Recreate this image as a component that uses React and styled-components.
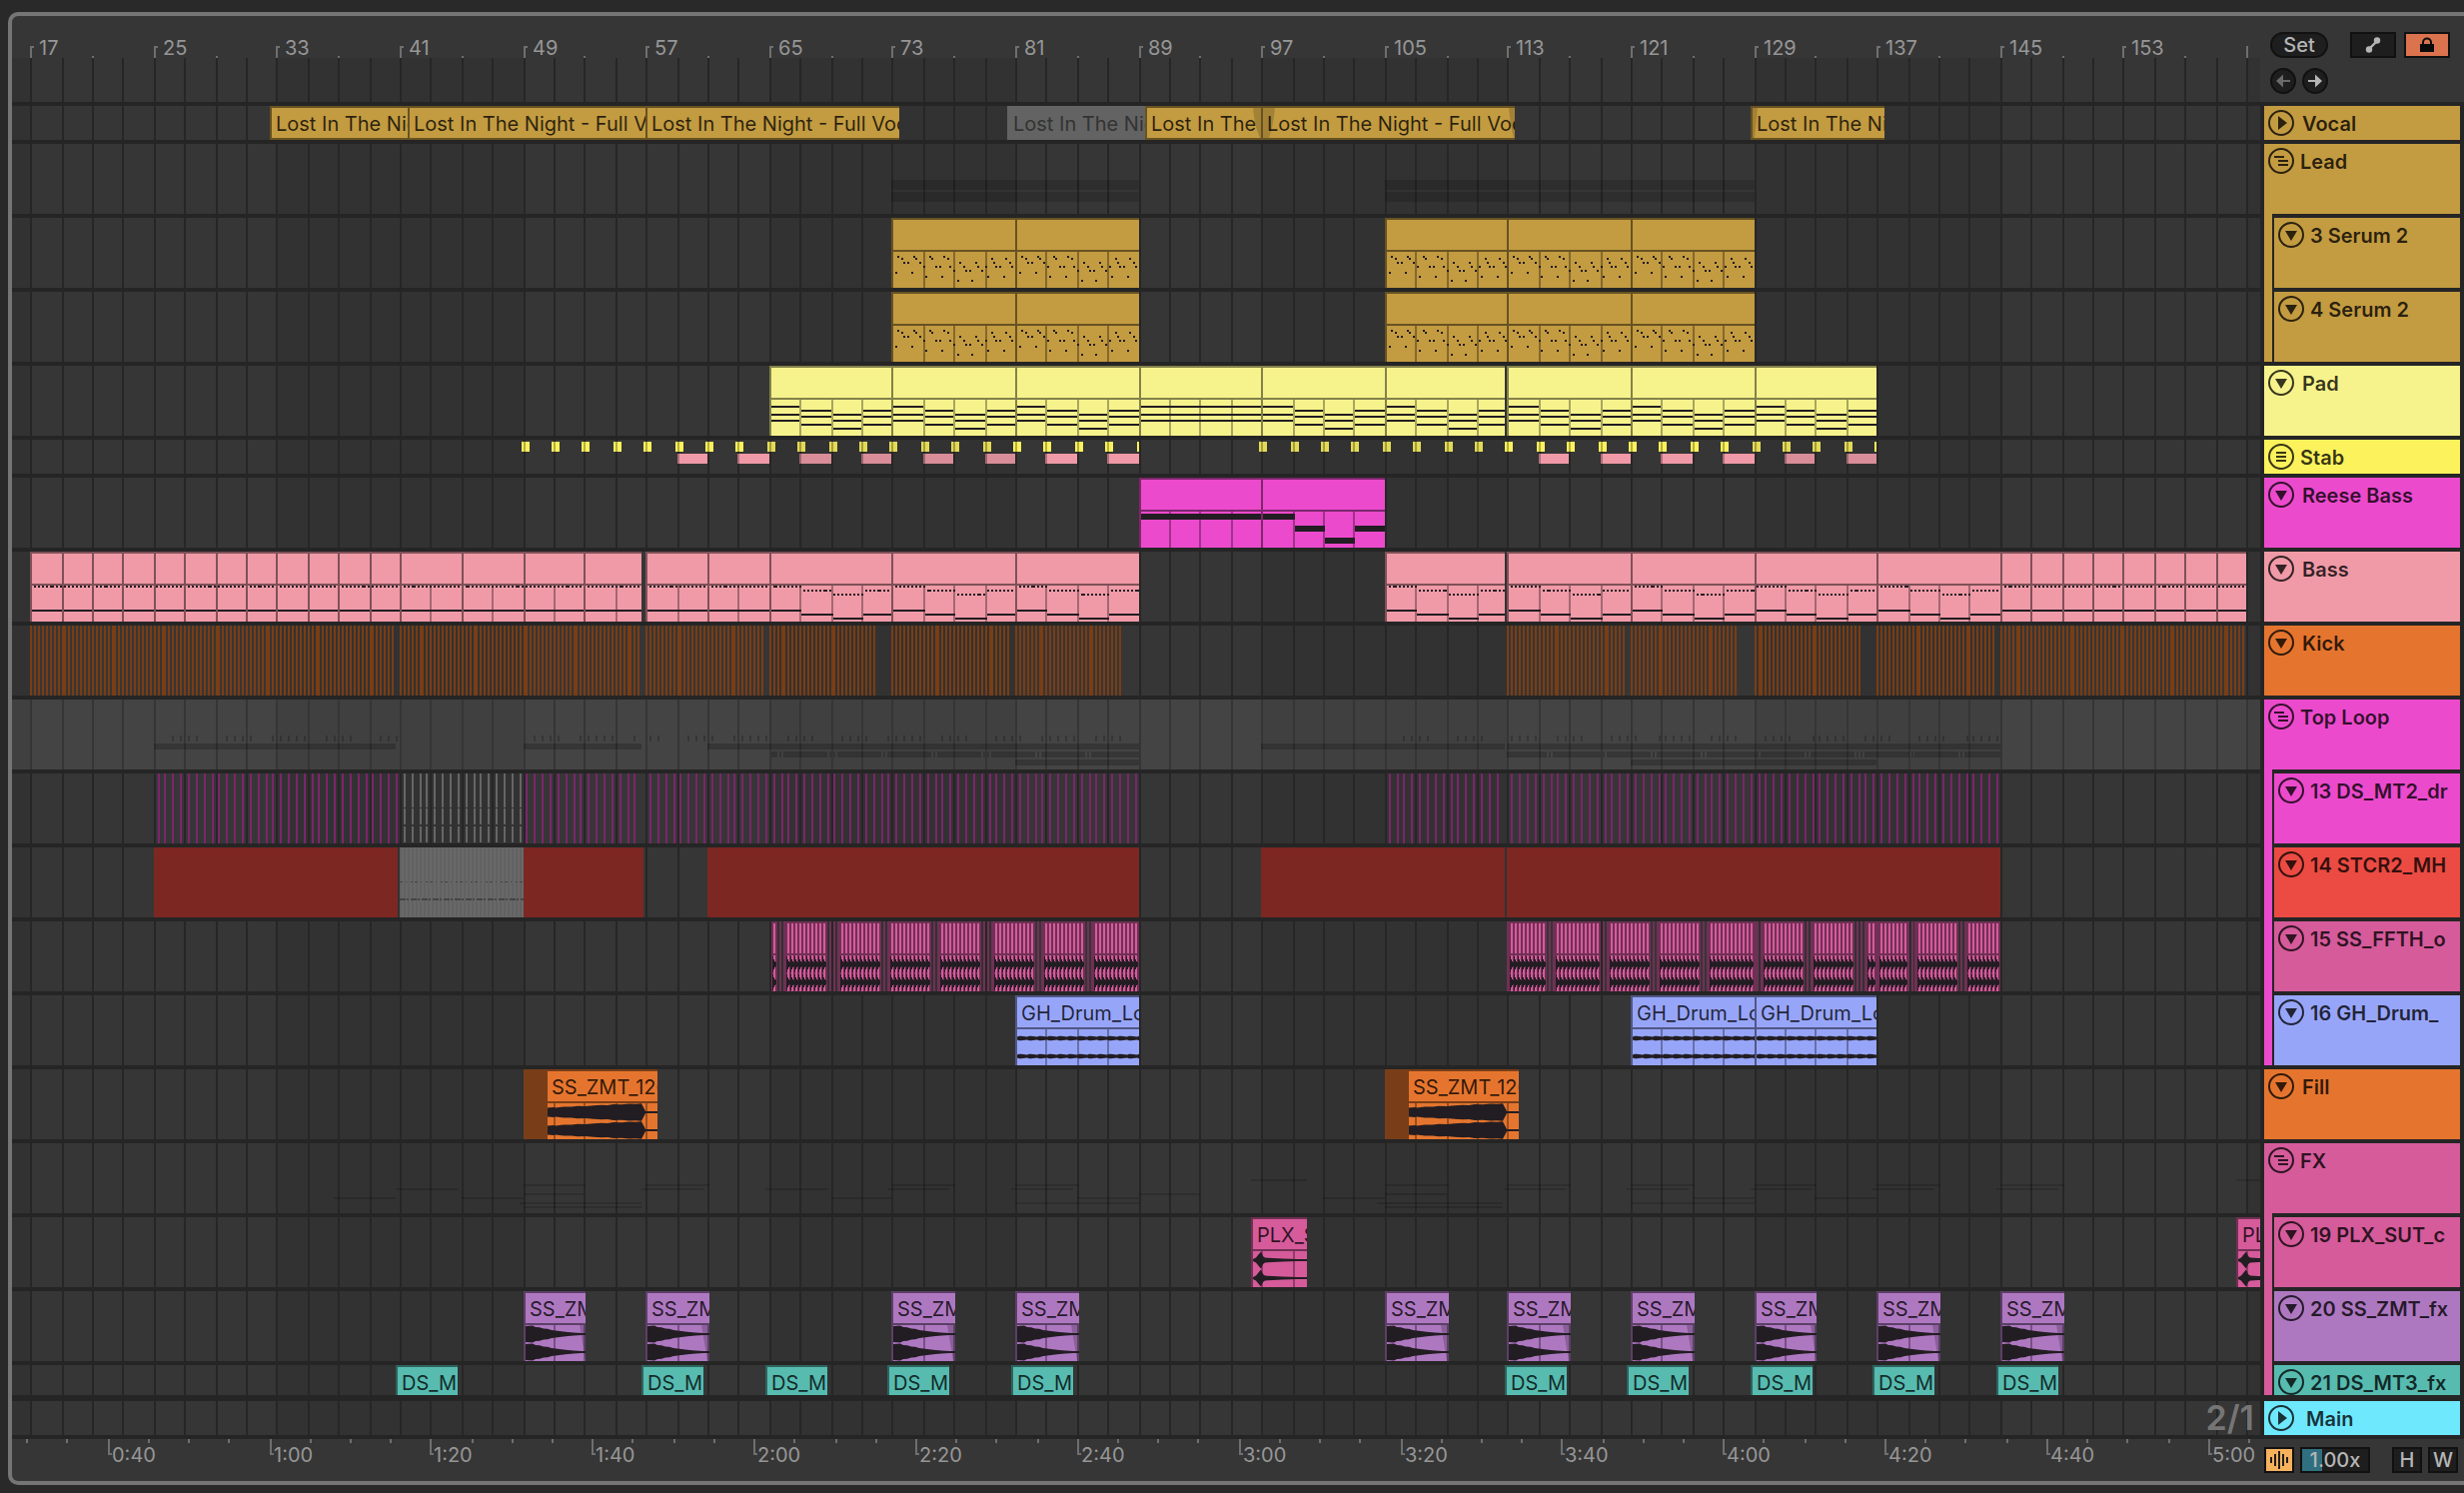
import React, { useState } from 'react'
import styled, { createGlobalStyle } from 'styled-components'

const COLORS = {
    gold: '#c39b41',
    pad: '#f7f38c',
    stab: '#fcf25c',
    magenta: '#ec4acd',
    pink: '#f09aa7',
    orange: '#e5752e',
    red: '#eb4b42',
    rose: '#d55b9b',
    blue: '#97a5f9',
    purple: '#ae78c1',
    teal: '#57bbb0',
    cyan: '#6ee8fd'
}

// bar number -> pixels inside the timeline, snapped to the 2px raster
const BAR = 15.4025
const x = bar => 2 * Math.round((18.2 + (bar - 17) * BAR) / 2)

const range = (from, to, step = 1) => {
    const list = []
    for (let v = from; v < to; v += step) list.push(v)
    return list
}

const box = (left, top, width, height) => `M${left} ${top}h${width}v${height}h${-width}z`

// four phrases of a riff, two bars each: [x, y] inside the clip body
const SERUM_NOTES = [
    [4, 20], [6, 4], [10, 6], [12, 10], [16, 10], [20, 20], [22, 4], [24, 6], [28, 10], [32, 14],
    [34, 24], [38, 4], [40, 6], [44, 14], [48, 14], [50, 24], [52, 4], [56, 6], [58, 14], [62, 18],
    [66, 28], [68, 10], [72, 14], [74, 18], [78, 18], [80, 28], [84, 10], [86, 14], [90, 18], [94, 14],
    [96, 24], [100, 6], [102, 10], [104, 14], [108, 14], [112, 24], [114, 6], [118, 10], [120, 14]
]

const PAD_CHORDS = [[6, 14, 20], [10, 16, 24], [14, 20, 28], [10, 16, 24]]
const BASS_STEPS = [0, 4, 8, 4]

const serumPath = () => SERUM_NOTES.map(([nx, ny]) => box(nx - 2, ny, 2, 2)).join('')

const padPath = (from, to, held) => range(from, to, 2).map((bar, i) => {
    const left = x(bar) - x(from)
    const width = Math.min(x(bar + 2), x(to)) - x(bar) - 2
    return PAD_CHORDS[held ? 0 : i % 4].map(y => box(left, y, held ? width + 2 : width, 2)).join('')
}).join('')

const bassPath = (from, to, moving) => range(from, to, 2).map((bar, i) => {
    const drop = moving ? BASS_STEPS[i % 4] : 0
    const end = Math.min(bar + 2, to)
    const dots = range(bar, end - 0.1, 0.25)
        .map(b => box(x(b + 0.1) - x(from), drop, 2, 2)).join('')
    return dots + box(x(bar) - x(from), 24 + drop, x(end) - x(bar), 2)
}).join('')

const reesePath = (from, steps) => steps.map((y, i) => {
    const left = x(from + i * 2) - x(from)
    return box(left, y, x(from + i * 2 + 2) - x(from + i * 2), 6)
}).join('')

// mirrored envelope drawn once per channel; points are [x, half height]
const wavePath = points => [9, 27].map(mid => {
    const top = points.map(([px, h]) => `${px} ${mid - h}`)
    const bottom = points.slice().reverse().map(([px, h]) => `${px} ${mid + h}`)
    return `M${top.join('L')}L${bottom.join('L')}z`
}).join('')

const RISER = wavePath([
    [0, 4.6], [6, 5], [8, 4.6], [16, 5.4], [24, 5.6], [30, 6.2], [38, 6], [46, 6.8], [54, 7.2], [60, 7],
    [66, 8], [74, 7.8], [82, 8.4], [88, 8.2], [94, 8.8], [97, 3], [98, 1], [112, 1]
])
const IMPACT = wavePath([
    [0, 8], [7, 8.4], [10, 7], [14, 6.8], [18, 5.4], [22, 5.2], [26, 4], [32, 3.2], [40, 2.2], [48, 1.6], [56, 1], [64, 1]
])
const CRASH = wavePath([[0, 1], [3, 2.5], [5, 5], [8, 8.4], [10, 4], [12, 2.4], [20, 2], [30, 1.4], [44, 1], [60, 1]])
const LOOP = wavePath(range(0, 126, 2).map(px => [px, 1.6 + ((px * 7) % 5) * 0.18]))

const vocals = [
    { from: 32.6, to: 41.5 },
    { from: 41.5, to: 57 },
    { from: 57, to: 73.5 },
    { from: 80.5, to: 89.5, muted: true },
    { from: 89.5, to: 97, fadeOut: 8 },
    { from: 97, to: 113.5, fadeIn: 12, fadeOut: 6 },
    { from: 128.8, to: 137.5, fadeIn: 5 }
].map(clip => ({ ...clip, title: 'Lost In The Night - Full Vocal' }))

const serums = [73, 81, 105, 113, 121].map(from => ({ from, to: from + 8, path: serumPath() }))

const pads = range(65, 137, 8).map(from => {
    const to = from === 105 ? 112.85 : from + 8
    return { from, to, path: padPath(from, to, from === 89) }
})

const reeses = [
    { from: 89, to: 97, path: reesePath(89, [2, 2, 2, 2]) },
    { from: 97, to: 105, path: reesePath(97, [2, 14, 26, 14]) }
]

const basses = [
    ...range(17, 41, 2).map(from => ({ from, to: from + 2 })),
    { from: 41, to: 45 },
    { from: 45, to: 49 },
    { from: 49, to: 53 },
    { from: 53, to: 56.75 },
    { from: 57, to: 61 },
    { from: 61, to: 65 },
    ...[65, 73, 81].map(from => ({ from, to: from + 8, moving: true })),
    { from: 105, to: 112.85, moving: true },
    ...[113, 121, 129, 137].map(from => ({ from, to: from + 8, moving: true })),
    ...range(145, 161, 2).map(from => ({ from, to: from + 2 }))
].map(clip => ({ ...clip, path: bassPath(clip.from, clip.to, clip.moving) }))

const drums = [81, 121, 129].map(from => ({ from, to: from + 8, title: 'GH_Drum_Loop', path: LOOP }))
const fills = [49, 105].map(from => ({ from, to: from + 8.75, title: 'SS_ZMT_126', path: RISER, lead: 24 }))
const crashes = [
    { from: 96.35, to: 100, title: 'PLX_SUT', path: CRASH },
    { from: 160.4, to: 164, title: 'PLX_SUT', path: CRASH }
]
const impacts = [49, 57, 73, 81, 105, 113, 121, 129, 137, 145]
    .map(from => ({ from, to: from + 4.12, title: 'SS_ZMT', path: IMPACT, tail: true }))
const downs = [40.75, 56.75, 64.75, 72.75, 80.75, 112.85, 120.75, 128.75, 136.75, 144.75]
    .map(from => ({ from, to: from + 4, title: 'DS_MT3' }))

const KICK_RANGES = [
    [17, 40.75], [41, 56.75], [57, 64.75], [65, 72], [73, 80.75], [81, 88],
    [113, 120.75], [121, 128], [129, 136], [137, 144.75], [145, 161]
]
const SHAKER_RANGES = [[25, 41], [49, 56.5], [57, 89], [105, 112.5], [113, 145]]
const HAT_RANGES = [[25, 40.9], [49, 56.9], [61, 89], [97, 112.85], [113, 145]]

// sliced percussion: [left, width] of each slice, [left, count] of the hits in it
const SLICES = [
    [760, 6], [768, 2], [772, 44], [818, 2], [822, 2], [826, 44], [872, 2], [876, 44], [922, 2], [926, 44],
    [972, 2], [976, 2], [980, 44], [1026, 2], [1030, 44], [1076, 2], [1080, 48],
    [1496, 40], [1538, 2], [1542, 48], [1592, 2], [1596, 44], [1642, 2], [1646, 44], [1692, 2], [1696, 52],
    [1750, 44], [1796, 2], [1800, 44], [1846, 2], [1850, 2], [1854, 45], [1901, 2], [1904, 44], [1950, 2], [1954, 36]
]
const HITS = [
    [762, 1], [776, 10], [830, 10], [880, 10], [930, 10], [984, 10], [1034, 10], [1084, 11],
    [1500, 9], [1546, 11], [1600, 10], [1650, 10], [1700, 11], [1754, 10], [1804, 10], [1858, 2], [1870, 7],
    [1908, 10], [1958, 8]
]

const FX_LINES = [
    { y: 36, spans: [[96.35, 100], [160.4, 164]] },
    { y: 41, spans: impacts.map(c => [c.from, c.to]) },
    { y: 45, spans: downs.map(c => [c.from, c.to]) },
    { y: 50, spans: [[49, 53], [89, 93], [105, 109]] },
    { y: 54, spans: [[36.75, 40.75], [45, 49], [69, 73], [85, 89], [101, 105], [125, 129], [133, 137]] },
    { y: 59, spans: [[48.75, 56.75], [81, 89], [104.5, 112.75], [121, 129]] },
    { y: 63, spans: [[49, 56.75], [105, 112.75]] }
]

const spanPath = (spans, y, h) => spans.map(([a, b]) => box(x(a), y, x(b) - x(a), h)).join('')

const kickPath = KICK_RANGES.map(([a, b]) => range(a, b, 0.25).map(v => box(x(v), 0, 2, 70)).join('')).join('')
const shakers = SHAKER_RANGES.flatMap(([a, b]) => range(a + 0.25, b, 0.5))
const shakerPath = shakers.map(v => box(x(v), 0, 2, 70)).join('')
const shakerTicks = shakers.filter(v => {
    const k = Math.round((v - 25.25) * 2) % 20
    return (k >= 2 && k <= 5) || (k >= 9 && k <= 12) || k >= 15
}).map(v => box(x(v), 36, 2, 6)).join('')
const mutedShakers = range(41.25, 49, 0.5)
    .map(v => box(x(v), 0, 2, 34) + box(x(v), 35, 2, 16) + box(x(v), 53, 2, 16)).join('')

const hitList = HITS.flatMap(([left, count]) => range(0, count).map(i => left + i * 4))
const hitBars = hitList.map(left => box(left, 2, 2, 30) + box(left, 34, 2, 36)).join('')
const hitWaves = hitList.map(left => [43, 61].map(mid =>
    `M${left - 1} ${mid - 8}l1 1l1 4l2 2v2l-2 2l-1 4l-1 1z`).join('')).join('')

const hatTexture = range(x(41), x(49), 4).map(v => box(v, 0, 2, 70)).join('')

function Grid() {
    return (
        <GridLayer aria-hidden="true">
            {[1, 33, 65, 97, 129, 161].map(bar => (
                <rect key={bar} x={x(bar)} y="0" width={x(bar + 16) - x(bar)} height="100%" fill="#323232" />
            ))}
            {range(17, 163, 2).map(bar => (
                <rect key={bar} x={x(bar)} y="0" width="2" height="100%" fill="#262626" />
            ))}
        </GridLayer>
    )
}

function Clip({ clip, color }) {
    const left = x(clip.from)
    const width = x(clip.to) - left
    const lead = clip.lead || 0
    const firstLine = Math.ceil((clip.from + 0.3 - 1) / 2) * 2 + 1
    const lines = range(firstLine, clip.to, 2)
        .map(bar => x(bar) - left - (lead || 2))
        .filter(v => v > 0)
        .map(v => box(v, 0, 2, 36)).join('')

    return (
        <ClipBox $color={color} $muted={clip.muted} $lead={lead} style={{ left, width }}>
            <ClipTitle $muted={clip.muted}>{clip.title}</ClipTitle>
            {clip.path && (
                <ClipBody>
                    <path d={lines} fill="rgba(0, 0, 0, 0.32)" />
                    {clip.tail && <path d="M54 0h8v36h-2z" fill="rgba(0, 0, 0, 0.2)" />}
                    <path d={clip.path} fill="#221d22" />
                </ClipBody>
            )}
            {(clip.fadeIn || clip.fadeOut) && (
                <Fades>
                    {clip.fadeIn && <path d={`M0 0h${clip.fadeIn}q-2 20 -${Math.ceil(clip.fadeIn / 2)} 30h-${Math.floor(clip.fadeIn / 2)}z`} />}
                    {clip.fadeOut && <path d={`M${width - 2} 0h-${clip.fadeOut}q2 20 ${clip.fadeOut - 1} 30h1z`} />}
                </Fades>
            )}
        </ClipBox>
    )
}

function ClipLane({ clips, color, height = 70 }) {
    return (
        <Lane $height={height}>
            {clips.map(clip => <Clip key={clip.from} clip={clip} color={color} />)}
        </Lane>
    )
}

function StabLane() {
    const marks = [...range(49, 89, 2), ...range(97, 137, 2)]
    const blocks = [59, 63, 67, 71, 75, 79, 83, 87, 115, 119, 123, 127, 131, 135]
    const shaded = bar => Math.floor((bar - 1) / 16) % 2 === 0
    return (
        <Lane $height={34}>
            <Drawing>
                {marks.map(bar => (
                    <g key={bar} opacity={shaded(bar) ? 0.88 : 1}>
                        <rect x={x(bar) - 2} y="2" width="8" height="10" fill={COLORS.stab} />
                        <rect x={x(bar)} y="2" width="2" height="10" fill="rgba(0, 0, 0, 0.28)" />
                    </g>
                ))}
                {[89, 137].map(bar => (
                    <rect key={bar} x={x(bar) - 2} y="2" width="2" height="10" fill={COLORS.stab} />
                ))}
                {blocks.map(bar => (
                    <g key={bar} opacity={shaded(bar) ? 0.88 : 1}>
                        <rect x={x(bar)} y="14" width={x(bar + 2) - x(bar)} height="10" fill={COLORS.pink} />
                        <rect x={x(bar)} y="14" width="2" height="10" fill="rgba(0, 0, 0, 0.28)" />
                    </g>
                ))}
            </Drawing>
        </Lane>
    )
}

function BarRuler() {
    const bars = range(17, 161, 8)
    return (
        <Ruler>
            <RulerTicks>
                {[...bars, 161].map(bar => (
                    <path key={bar} d={box(x(bar), 30, 2, 12) + (bar < 161 ? box(x(bar) + 2, 30, 2, 2) : '')} />
                ))}
                {bars.map(bar => <path key={bar} d={box(x(bar + 4), 40, 2, 2)} />)}
            </RulerTicks>
            <RulerCell style={{ width: x(17) }} />
            {bars.map(bar => (
                <RulerCell key={bar} style={{ width: x(bar + 8) - x(bar) }}>
                    <BarLabel>{bar}</BarLabel>
                </RulerCell>
            ))}
        </Ruler>
    )
}

// 20 seconds are ten and a half bars at 126 bpm
const timeX = seconds => 2 * Math.floor((96.4 + (seconds - 40) * 8.085) / 2)

function TimeRuler() {
    const labels = range(40, 301, 20)
    return (
        <Ruler>
            <RulerTicks>
                {range(30, 310, 5).map(s => (
                    s % 20 === 0
                        ? <path key={s} d={box(timeX(s), 0, 2, 16) + box(timeX(s) + 2, 14, 2, 2)} />
                        : <path key={s} d={box(timeX(s), 0, 2, 4)} />
                ))}
            </RulerTicks>
            <RulerCell style={{ width: timeX(40) }} />
            {labels.map(s => (
                <RulerCell key={s} style={{ width: timeX(s + 20) - timeX(s) }}>
                    <TimeLabel>{`${Math.floor(s / 60)}:${String(s % 60).padStart(2, '0')}`}</TimeLabel>
                </RulerCell>
            ))}
        </Ruler>
    )
}

const GLYPHS = {
    open: <path d="M7 9h12l-6 10z" />,
    closed: <path d="M10 6l9 7l-9 7z" />,
    group: <path d="M6 8h10v2h-10zM10 12h10v2h-10zM10 16h10v2h-10z" />,
    list: <path d="M8 8h10v2h-10zM8 12h10v2h-10zM8 16h10v2h-10z" />
}

function TrackHeader({ name, color, glyph = 'open', height = 70, gap = 6 }) {
    return (
        <HeaderBox $color={color} $height={height} $gap={gap}>
            <FoldButton aria-label={`Fold ${name}`}>
                <svg width="26" height="26" viewBox="0 0 26 26" fill="currentColor" aria-hidden="true">
                    <circle cx="13" cy="13" r="12" fill="none" stroke="currentColor" strokeWidth="2" />
                    {GLYPHS[glyph]}
                </svg>
            </FoldButton>
            <TrackName>{name}</TrackName>
        </HeaderBox>
    )
}

function TrackGroup({ name, color, children }) {
    return (
        <GroupBox $color={color}>
            <TrackHeader name={name} color={color} glyph="group" />
            <GroupTracks>{children}</GroupTracks>
        </GroupBox>
    )
}

function App() {
    const [speed, setSpeed] = useState('1.00x')

    return (
        <>
            <GlobalStyle />
            <Panel>
                <Timeline>
                    <BarRuler />
                    <Stage>
                        <Grid />
                        <Scrub />
                        <ClipLane clips={vocals} color={COLORS.gold} height={34} />
                        <Lane $height={70}>
                            <Drawing>
                                <path d={spanPath([[73, 89], [105, 129]], 36, 10)} fill="rgba(0, 0, 0, 0.14)" />
                                <path d={spanPath([[73, 89], [105, 129]], 48, 10)} fill="rgba(0, 0, 0, 0.14)" />
                            </Drawing>
                        </Lane>
                        <ClipLane clips={serums} color={COLORS.gold} />
                        <ClipLane clips={serums} color={COLORS.gold} />
                        <ClipLane clips={pads} color={COLORS.pad} />
                        <StabLane />
                        <ClipLane clips={reeses} color={COLORS.magenta} />
                        <ClipLane clips={basses} color={COLORS.pink} />
                        <Lane $height={70}>
                            <Drawing><path d={kickPath} fill="#7a3d14" /></Drawing>
                        </Lane>
                        <Lane $height={70} $selected>
                            <Drawing fill="rgba(0, 0, 0, 0.2)">
                                <path d={shakerTicks} />
                                <path d={spanPath([[25, 40.75], [49, 56.75], [61, 89], [97, 112.85], [113, 145]], 44, 6)} />
                                <path d={SLICES.map(([left, width]) => box(left, 52, width, 6)).join('')} />
                                <path d={spanPath([[81, 89], [121, 137]], 60, 6)} />
                            </Drawing>
                        </Lane>
                        <Lane $height={70}>
                            <Drawing>
                                <path d={shakerPath} fill="#7c256b" />
                                <path d={mutedShakers} fill="#666666" />
                            </Drawing>
                        </Lane>
                        <Lane $height={70}>
                            <Drawing>
                                <path d={spanPath(HAT_RANGES, 0, 70)} fill="#7c2722" />
                                <path d={spanPath([[41, 49]], 0, 70)} fill="#686868" />
                                <path d={hatTexture} fill="#626262" />
                                <line x1={x(41)} x2={x(49)} y1="34.5" y2="34.5" stroke="#444444" strokeDasharray="3 3 1 4 2 2" />
                                <line x1={x(41)} x2={x(49)} y1="52" y2="52" stroke="#444444" strokeWidth="2" strokeDasharray="6 1 2 2" />
                            </Drawing>
                        </Lane>
                        <Lane $height={70}>
                            <Drawing>
                                <path d={SLICES.map(([left, width]) => box(left, 0, width, 70)).join('')} fill="#703055" />
                                <path d={hitBars} fill={COLORS.rose} />
                                <path d={hitWaves} fill="#221d22" />
                            </Drawing>
                        </Lane>
                        <ClipLane clips={drums} color={COLORS.blue} />
                        <ClipLane clips={fills} color={COLORS.orange} />
                        <Lane $height={70}>
                            <Drawing fill="rgba(0, 0, 0, 0.14)">
                                {FX_LINES.map(({ y, spans }) => <path key={y} d={spanPath(spans, y, 2)} />)}
                            </Drawing>
                        </Lane>
                        <ClipLane clips={crashes} color={COLORS.rose} />
                        <ClipLane clips={impacts} color={COLORS.purple} />
                        <ClipLane clips={downs} color={COLORS.teal} height={30} />
                        <MainLane $height={34}>
                            <GridSize>2/1</GridSize>
                        </MainLane>
                    </Stage>
                    <TimeRuler />
                </Timeline>

                <Sidebar>
                    <Toolbar>
                        <ToolRow>
                            <PillButton>Set</PillButton>
                            <ToolGroup>
                                <SquareButton aria-label="Automation mode" $wide>
                                    <svg width="20" height="20" viewBox="0 0 20 20" aria-hidden="true">
                                        <path d="M6 14L14 6" stroke="#b5b5b5" strokeWidth="2.4" />
                                        <circle cx="6" cy="14.5" r="3.2" fill="#b5b5b5" />
                                        <circle cx="14" cy="5.5" r="3.2" fill="#b5b5b5" />
                                    </svg>
                                </SquareButton>
                                <SquareButton aria-label="Lock envelopes" $wide $color="#dc734f">
                                    <svg width="16" height="18" viewBox="0 0 16 18" aria-hidden="true">
                                        <rect x="1" y="8" width="14" height="8" fill="#0b0b0b" />
                                        <path d="M4 9V6.500a4 4 0 0 1 8 0V9" fill="none" stroke="#0b0b0b" strokeWidth="2" />
                                    </svg>
                                </SquareButton>
                            </ToolGroup>
                        </ToolRow>
                        <ArrowRow>
                            <RoundButton aria-label="Previous locator" $dim>
                                <svg width="14" height="14" viewBox="0 0 14 14" fill="currentColor" aria-hidden="true">
                                    <path d="M0 7l7-6.500v5.500h7v2h-7v5.500z" />
                                </svg>
                            </RoundButton>
                            <RoundButton aria-label="Next locator">
                                <svg width="14" height="14" viewBox="0 0 14 14" fill="currentColor" aria-hidden="true">
                                    <path d="M14 7l-7-6.500v5.500h-7v2h7v5.500z" />
                                </svg>
                            </RoundButton>
                        </ArrowRow>
                    </Toolbar>
                    <Headers>
                        <TrackHeader name="Vocal" color={COLORS.gold} glyph="closed" height={34} gap={8} />
                        <TrackGroup name="Lead" color={COLORS.gold}>
                            <TrackHeader name="3 Serum 2" color={COLORS.gold} />
                            <TrackHeader name="4 Serum 2" color={COLORS.gold} />
                        </TrackGroup>
                        <TrackHeader name="Pad" color={COLORS.pad} gap={8} />
                        <TrackHeader name="Stab" color={COLORS.stab} glyph="list" height={34} />
                        <TrackHeader name="Reese Bass" color={COLORS.magenta} gap={8} />
                        <TrackHeader name="Bass" color={COLORS.pink} gap={8} />
                        <TrackHeader name="Kick" color={COLORS.orange} gap={8} />
                        <TrackGroup name="Top Loop" color={COLORS.magenta}>
                            <TrackHeader name="13 DS_MT2_dr" color={COLORS.magenta} />
                            <TrackHeader name="14 STCR2_MH" color={COLORS.red} />
                            <TrackHeader name="15 SS_FFTH_o" color={COLORS.rose} />
                            <TrackHeader name="16 GH_Drum_" color={COLORS.blue} />
                        </TrackGroup>
                        <TrackHeader name="Fill" color={COLORS.orange} gap={8} />
                        <TrackGroup name="FX" color={COLORS.rose}>
                            <TrackHeader name="19 PLX_SUT_c" color={COLORS.rose} />
                            <TrackHeader name="20 SS_ZMT_fx" color={COLORS.purple} />
                            <TrackHeader name="21 DS_MT3_fx" color={COLORS.teal} height={30} />
                        </TrackGroup>
                        <MainHeader>
                            <TrackHeader name="Main" color={COLORS.cyan} glyph="closed" height={34} gap={12} />
                        </MainHeader>
                    </Headers>
                    <Footer>
                        <SquareButton aria-label="Optimize waveforms" $color="#f6b15c">
                            <svg width="20" height="20" viewBox="0 0 20 20" fill="#1e1e1e" aria-hidden="true">
                                <path d="M1 7h2v6h-2zM5 4h2v12h-2zM9 1h2v18h-2zM13 4h2v12h-2zM17 7h2v6h-2z" />
                            </svg>
                        </SquareButton>
                        <SpeedInput
                            aria-label="Playback zoom"
                            value={speed}
                            onChange={e => setSpeed(e.target.value)}
                        />
                        <ToolGroup $tight>
                            <SquareButton>H</SquareButton>
                            <SquareButton>W</SquareButton>
                        </ToolGroup>
                    </Footer>
                </Sidebar>
            </Panel>
        </>
    )
}

const GlobalStyle = createGlobalStyle`
    * {
        box-sizing: border-box;
    }

    body {
        margin: 0;
        background-color: #292929;
        font-family: Inter, "Liberation Sans", sans-serif;
        font-size: 20px;
    }

    button, input {
        font: inherit;
    }
`;

const Panel = styled.main`
    display: flex;
    margin: 12px 0 8px 8px;
    border: 4px solid #757575;
    border-right: 0;
    border-radius: 10px 0 0 10px;
    background-color: #363636;
    overflow: hidden;
`;

const Timeline = styled.section`
    flex: 1;
    min-width: 0;
    overflow: hidden;
`;

const Ruler = styled.div`
    position: relative;
    display: flex;
    height: 42px;
    overflow: hidden;
    color: #969696;
`;

const RulerTicks = styled.svg`
    position: absolute;
    width: 100%;
    height: 100%;
    fill: #6f6f6f;
    shape-rendering: crispEdges;
`;

const RulerCell = styled.div`
    flex: none;
`;

const BarLabel = styled.div`
    padding: 20px 0 0 9px;
    line-height: 24px;
`;

const TimeLabel = styled.div`
    padding: 4px 0 0 4px;
    line-height: 24px;
`;

const Stage = styled.div`
    position: relative;
    border-bottom: 4px solid #252525;
    overflow: hidden;
`;

const GridLayer = styled.svg`
    position: absolute;
    width: 100%;
    height: 100%;
    shape-rendering: crispEdges;
`;

const Scrub = styled.div`
    height: 44px;
`;

const Lane = styled.div`
    position: relative;
    box-sizing: content-box;
    height: ${props => props.$height}px;
    border-top: 4px solid #252525;
    background-color: ${props => props.$selected ? 'rgba(255, 255, 255, 0.07)' : 'transparent'};
    background-clip: padding-box;
    overflow: hidden;
`;

const MainLane = styled(Lane)`
    display: flex;
    justify-content: flex-end;
    align-items: center;
    border-top-width: 6px;
    padding-right: 6px;
`;

const GridSize = styled.span`
    font-size: 34px;
    line-height: 34px;
    font-weight: 600;
    color: #757575;
`;

const Drawing = styled.svg`
    display: block;
    width: 100%;
    height: 100%;
    shape-rendering: crispEdges;
`;

const ClipBox = styled.div`
    position: absolute;
    top: 0;
    bottom: 0;
    border-style: solid;
    border-color: ${props => props.$muted ? '#636363' : 'rgba(0, 0, 0, 0.47)'};
    border-width: 2px 0 0 ${props => props.$lead || 2}px;
    background-color: ${props => props.$muted ? '#636363' : props.$color};
    overflow: hidden;
`;

const ClipTitle = styled.div`
    box-sizing: content-box;
    height: 30px;
    padding-left: 4px;
    border-bottom: 2px solid ${props => props.$muted ? '#636363' : 'rgba(0, 0, 0, 0.47)'};
    line-height: 32px;
    white-space: nowrap;
    color: ${props => props.$muted ? '#333333' : 'rgba(0, 0, 0, 0.78)'};
`;

const ClipBody = styled.svg`
    display: block;
    width: 100%;
    height: 36px;
    overflow: visible;
`;

const Fades = styled.svg`
    position: absolute;
    top: 0;
    left: 0;
    width: 100%;
    height: 30px;
    fill: rgba(0, 0, 0, 0.16);
`;

const Sidebar = styled.aside`
    flex: none;
    width: 204px;
`;

const Toolbar = styled.div`
    display: flex;
    flex-direction: column;
    gap: 10px;
    height: 86px;
    padding: 16px 14px 0 10px;
`;

const ToolRow = styled.div`
    display: flex;
    justify-content: space-between;
`;

const ArrowRow = styled.div`
    display: flex;
    gap: 6px;
`;

const ToolGroup = styled.div`
    display: flex;
    gap: ${props => props.$tight ? 6 : 8}px;
    margin-left: auto;
`;

const BaseButton = styled.button`
    display: flex;
    justify-content: center;
    align-items: center;
    height: 26px;
    padding: 0;
    border: 2px solid #111111;
    background-color: #1e1e1e;
    color: #b5b5b5;
    font-weight: 500;
    line-height: 22px;
`;

const PillButton = styled(BaseButton)`
    width: 58px;
    border-radius: 13px;
`;

const RoundButton = styled(BaseButton)`
    width: 26px;
    border-radius: 50%;
    color: ${props => props.$dim ? '#6a6a6a' : '#b5b5b5'};
`;

const SquareButton = styled(BaseButton)`
    width: ${props => props.$wide ? 46 : 30}px;
    background-color: ${props => props.$color || '#1e1e1e'};
`;

const Headers = styled.div`
    display: flex;
    flex-direction: column;
    gap: 4px;
    padding: 4px;
    background-color: #252525;
`;

const HeaderBox = styled.div`
    display: flex;
    align-items: flex-start;
    gap: ${props => props.$gap}px;
    height: ${props => props.$height}px;
    padding: 4px 0 0 4px;
    background-color: ${props => props.$color};
    color: rgba(0, 0, 0, 0.78);
    overflow: hidden;
`;

const FoldButton = styled.button`
    flex: none;
    width: 26px;
    height: 26px;
    padding: 0;
    border: 0;
    background: none;
    color: inherit;
`;

const TrackName = styled.div`
    line-height: 28px;
    font-weight: 600;
    white-space: nowrap;
`;

const GroupBox = styled.div`
    background-color: ${props => props.$color};
`;

const GroupTracks = styled.div`
    display: flex;
    flex-direction: column;
    gap: 4px;
    margin-left: 8px;
    padding: 4px 0 0 2px;
    background-color: #252525;
`;

const MainHeader = styled.div`
    padding-top: 2px;
`;

const Footer = styled.div`
    display: flex;
    gap: 6px;
    padding: 8px 6px 8px 4px;
`;

const SpeedInput = styled.input`
    width: 70px;
    height: 26px;
    padding: 0;
    border: 2px solid #111111;
    border-radius: 0;
    background: linear-gradient(to right, #2f6f80 20px, #1e1e1e 20px);
    color: #b5b5b5;
    font-weight: 500;
    text-align: center;
`;

export default App
